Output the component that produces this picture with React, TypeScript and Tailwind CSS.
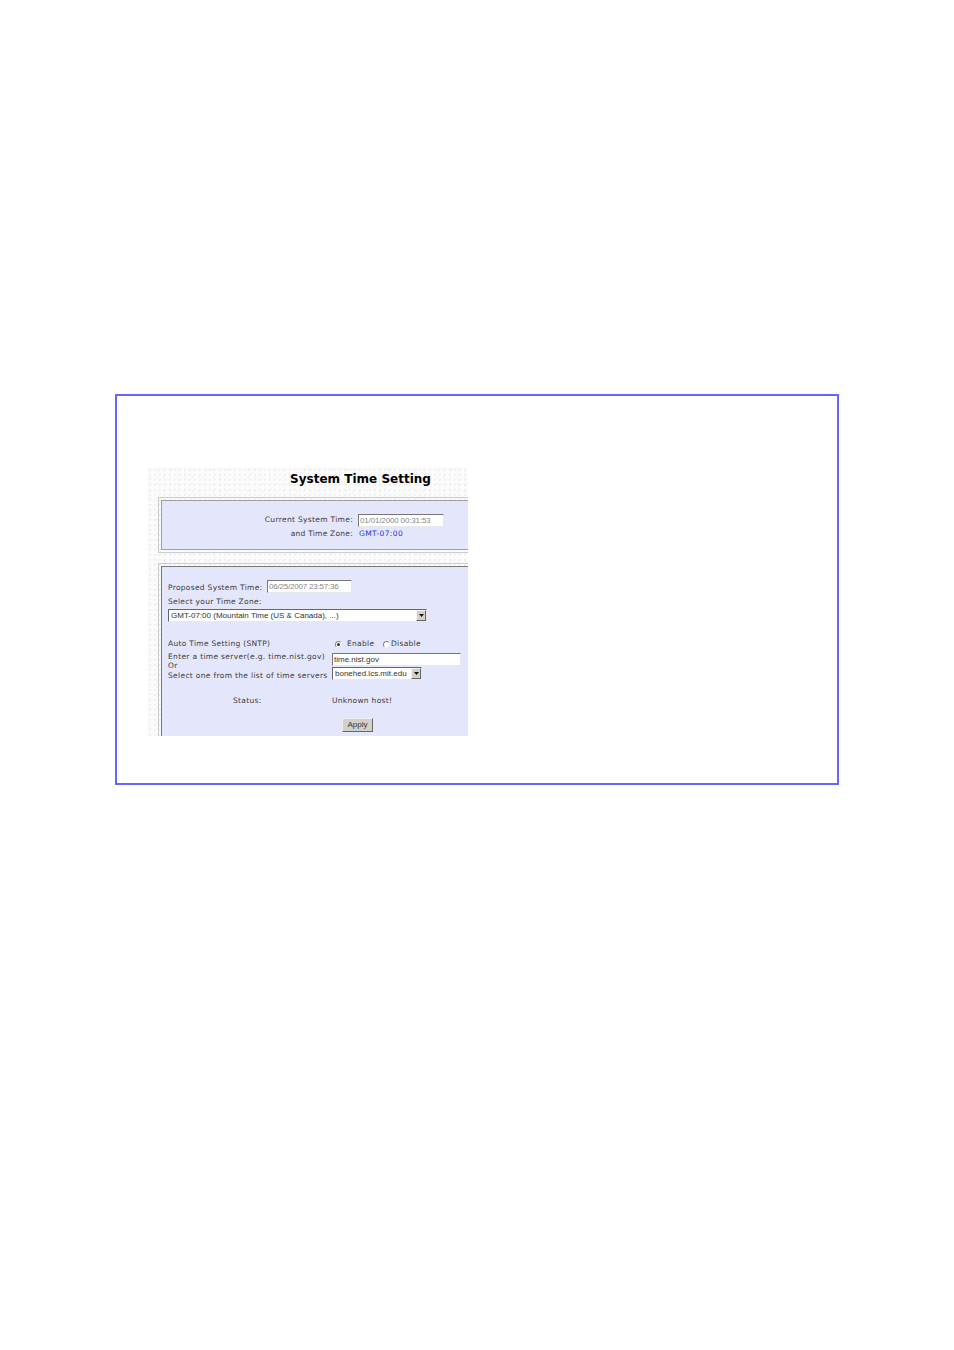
function Field({ value, className }: { value: string; className: string }) {
  return (
    <input
      readOnly
      value={value}
      className={`block h-[13px] border border-t-[#777777] border-l-[#777777] border-r-[#e8e8e8] border-b-[#e8e8e8] bg-white px-px font-['Liberation_Sans',sans-serif] text-[8px] leading-none outline-none ${className}`}
    />
  )
}

function Dropdown({ value, className }: { value: string; className: string }) {
  return (
    <div className={`flex h-[13px] items-center justify-between border border-t-[#666666] border-l-[#666666] border-r-[#e8e8e8] border-b-[#e8e8e8] bg-white pl-[2px] font-['Liberation_Sans',sans-serif] text-[8px] leading-none text-[#333333] ${className}`}>
      <span className="truncate">{value}</span>
      <span className="flex h-[11px] w-[10px] shrink-0 items-center justify-center border border-t-[#f4f4f4] border-l-[#f4f4f4] border-r-[#666666] border-b-[#666666] bg-[#d4d0c8]">
        <svg width="5" height="3" viewBox="0 0 5 3"><path d="M0 0h5L2.5 3z" fill="#111" /></svg>
      </span>
    </div>
  )
}

function Radio({ checked }: { checked?: boolean }) {
  return (
    <span className="flex h-[7px] w-[7px] shrink-0 items-center justify-center rounded-full border border-t-[#888888] border-l-[#888888] border-r-[#eeeeee] border-b-[#eeeeee] bg-white">
      {checked && <span className="h-[3px] w-[3px] rounded-full bg-[#333333]" />}
    </span>
  )
}

export default function App() {
  return (
    <div className="min-h-[1350px] bg-white pl-[115px] pt-[394px] font-['DejaVu_Sans',sans-serif] text-[7.5px] leading-none text-[#3a3a3a]">
      <div className="h-[391px] w-[724px] border-2 border-[#6666ff] pl-[30px] pt-[71px]">
        <div className="h-[269px] w-[321px] overflow-hidden bg-[#fbfbfb] bg-[radial-gradient(#eeeeee_1px,transparent_1px),radial-gradient(#f2f2f2_1px,transparent_1px)] bg-[length:5px_5px,7px_7px] pl-[11px]">
          <h1 className="flex h-[24px] items-center justify-center pl-[95px] text-[12px] font-bold text-black">
            System Time Setting
          </h1>

          <div className="-mr-2 mt-[6px] h-[56px] border border-[#cccccc] p-[2px]">
            <div className="h-[50px] border border-[#a0a0a0] bg-[#e4e6fb] pt-[12px]">
              <div className="flex h-[14px] items-center">
                <span className="w-[191px] text-right tracking-[0.32px]">Current System Time:</span>
                <Field value="01/01/2000 00:31:53" className="ml-[5px] w-[86px] tracking-[-0.15px] text-[#888888]" />
              </div>
              <div className="mt-[1px] flex h-[12px] items-center">
                <span className="w-[191px] text-right tracking-[0.25px]">and Time Zone:</span>
                <span className="ml-[6px] tracking-[0.4px] text-[#2030ee]">GMT-07:00</span>
              </div>
            </div>
          </div>

          <div className="-mr-2 mt-[10px] h-[200px] border border-[#cccccc] p-[2px]">
            <div className="h-[200px] border border-[#777777] bg-[#e4e6fb] pl-[6px] pt-[13px]">
              <div className="flex h-[13px] items-center">
                <span className="w-[99px] pt-[3px] tracking-[0.3px]">Proposed System Time:</span>
                <Field value="06/25/2007 23:57:36" className="w-[85px] tracking-[-0.2px] text-[#888888]" />
              </div>
              <div className="mt-[4px] flex h-[10px] items-center tracking-[0.3px]">Select your Time Zone:</div>
              <Dropdown value="GMT-07:00 (Mountain Time (US & Canada), ...)" className="mt-[2px] w-[259px]" />

              <div className="mt-[17px] flex h-[10px] items-center">
                <span className="w-[167px] tracking-[0.3px]">Auto Time Setting (SNTP)</span>
                <Radio checked />
                <span className="ml-[5px] w-[36px] shrink-0 tracking-[0.3px]">Enable</span>
                <Radio />
                <span className="ml-[1px] tracking-[0.3px]">Disable</span>
              </div>

              <div className="mt-[3px] flex">
                <div className="w-[164px] tracking-[0.33px]">
                  <div className="flex h-[9px] items-center whitespace-nowrap">Enter a time server(e.g. time.nist.gov)</div>
                  <div className="flex h-[9px] items-center">Or</div>
                  <div className="mt-[1px] flex h-[9px] items-center whitespace-nowrap">Select one from the list of time servers</div>
                </div>
                <div className="pt-px">
                  <Field value="time.nist.gov" className="w-[129px] text-[#333333]" />
                  <Dropdown value="bonehed.lcs.mit.edu" className="mt-px w-[90px]" />
                </div>
              </div>

              <div className="mt-[16px] flex h-[10px] items-center tracking-[0.3px]">
                <span className="ml-[65px] w-[99px]">Status:</span>
                <span>Unknown host!</span>
              </div>

              <button className="ml-[174px] mt-[12px] flex h-[14px] w-[31px] items-center justify-center border border-t-[#eeeeee] border-l-[#eeeeee] border-r-[#666666] border-b-[#666666] bg-[#d4d0c8] font-['Liberation_Sans',sans-serif] text-[8px] text-[#333333]">
                Apply
              </button>
            </div>
          </div>
        </div>
      </div>
    </div>
  )
}
